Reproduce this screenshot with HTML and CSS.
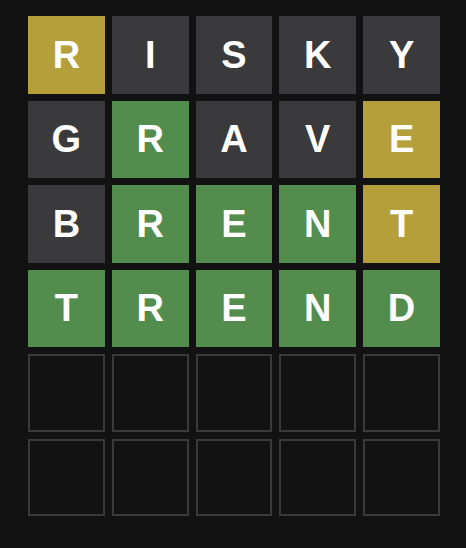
FILE: index.html
```html
<!DOCTYPE html>
<html>
<head>
<meta charset="utf-8">
<link rel="stylesheet" href="styles.css">
</head>
<body>
<div class="board">
  <div class="tile present">R</div>
  <div class="tile absent">I</div>
  <div class="tile absent">S</div>
  <div class="tile absent">K</div>
  <div class="tile absent">Y</div>

  <div class="tile absent">G</div>
  <div class="tile correct">R</div>
  <div class="tile absent">A</div>
  <div class="tile absent">V</div>
  <div class="tile present">E</div>

  <div class="tile absent">B</div>
  <div class="tile correct">R</div>
  <div class="tile correct">E</div>
  <div class="tile correct">N</div>
  <div class="tile present">T</div>

  <div class="tile correct">T</div>
  <div class="tile correct">R</div>
  <div class="tile correct">E</div>
  <div class="tile correct">N</div>
  <div class="tile correct">D</div>

  <div class="tile empty"></div>
  <div class="tile empty"></div>
  <div class="tile empty"></div>
  <div class="tile empty"></div>
  <div class="tile empty"></div>

  <div class="tile empty"></div>
  <div class="tile empty"></div>
  <div class="tile empty"></div>
  <div class="tile empty"></div>
  <div class="tile empty"></div>
</div>
</body>
</html>
```
FILE: styles.css
```css
html, body {
  margin: 0;
  background: #121213;
}
body {
  padding: 16px 0 0 28px;
  width: 466px;
  height: 548px;
  box-sizing: border-box;
  font-family: "Liberation Sans", Arial, sans-serif;
}
.board {
  width: 412px;
  height: 500px;
  display: grid;
  grid-template-columns: repeat(5, 1fr);
  grid-template-rows: repeat(6, 1fr);
  gap: 7px;
}
.tile {
  display: flex;
  align-items: center;
  justify-content: center;
  color: #ffffff;
  font-size: 38px;
  font-weight: bold;
  line-height: 1;
  box-sizing: border-box;
}
.present { background: #b59f3b; }
.absent { background: #3a3a3c; }
.correct { background: #538d4e; }
.empty { border: 2px solid #3a3a3c; }
```
